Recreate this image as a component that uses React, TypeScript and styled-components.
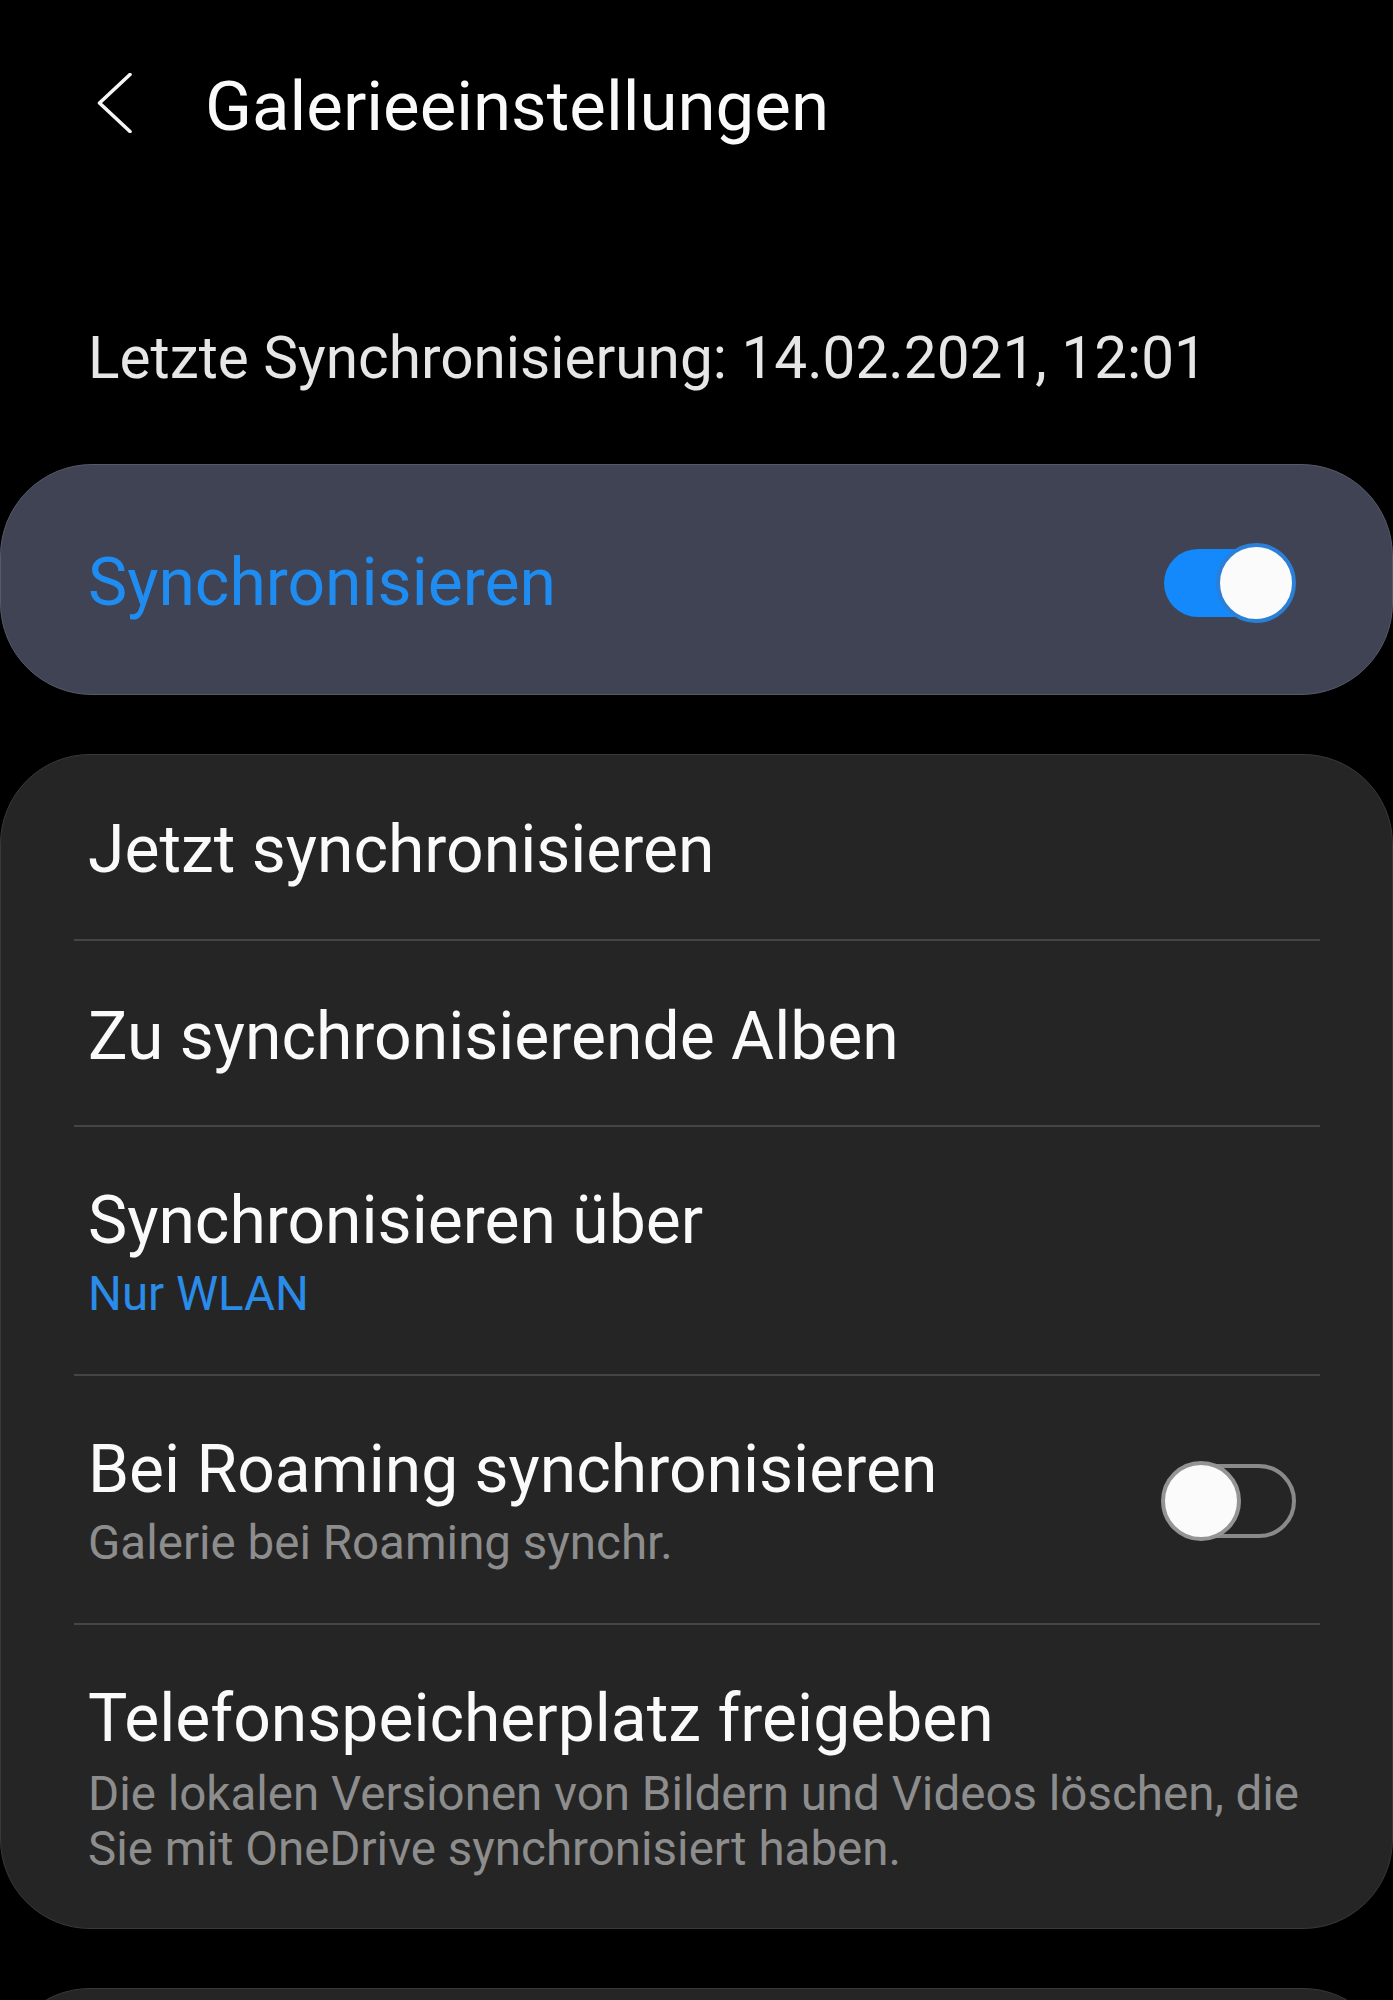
import React from "react";
import styled, { createGlobalStyle } from "styled-components";

const GlobalStyle = createGlobalStyle`
  html, body {
    margin: 0;
    padding: 0;
    background: #000000;
  }
  body {
    font-family: Roboto, "Noto Sans", "Liberation Sans", sans-serif;
    color: #fafafa;
    -webkit-font-smoothing: antialiased;
  }
  * { box-sizing: border-box; }
`;

const Screen = styled.div`
  width: 1393px;
  min-height: 2000px;
  background: #000000;
  overflow: hidden;
  display: flex;
  flex-direction: column;
`;

const Header = styled.header`
  display: flex;
  align-items: flex-start;
  padding: 65px 0 0 97px;
  height: 148px;
`;

const BackButton = styled.div`
  width: 36px;
  height: 60px;
  margin-top: 8px;
  display: flex;
  color: #f5f5f5;
`;

const Title = styled.h1`
  margin: 0 0 0 72px;
  font-size: 69px;
  line-height: 83px;
  font-weight: 400;
  color: #fafafa;
`;

const LastSync = styled.div`
  margin-top: 176px;
  padding-left: 88px;
  font-size: 58.5px;
  line-height: 68px;
  color: #e6e6e6;
`;

const MasterPill = styled.div`
  margin-top: 72px;
  height: 231px;
  background: #3f4354;
  border: 1px solid #555a6b;
  border-radius: 92px;
  display: flex;
  align-items: center;
  justify-content: space-between;
  padding: 6px 96px 0 87px;
`;

const MasterLabel = styled.span`
  font-size: 66px;
  line-height: 78px;
  color: #1e8cf0;
`;

const Card = styled.section<{ $minHeight?: number }>`
  margin-top: 59px;
  background: #252525;
  border: 1px solid #393939;
  border-radius: 90px;
  display: flex;
  flex-direction: column;
  min-height: ${(p) => (p.$minHeight ? `${p.$minHeight}px` : "auto")};
`;

const Row = styled.div<{ $top: number; $bottom: number }>`
  display: flex;
  align-items: center;
  justify-content: space-between;
  padding: ${(p) => p.$top}px 96px ${(p) => p.$bottom}px 87px;
`;

const RowText = styled.div`
  display: flex;
  flex-direction: column;
  min-width: 0;
`;

const RowTitle = styled.span`
  font-size: 66px;
  line-height: 78px;
  color: #fafafa;
  white-space: nowrap;
`;

const RowSub = styled.span<{ $accent?: boolean; $gap?: number }>`
  margin-top: ${(p) => p.$gap ?? 7}px;
  font-size: 47.5px;
  line-height: 55px;
  white-space: nowrap;
  color: ${(p) => (p.$accent ? "#2a8ce8" : "#8d8d8d")};
`;

const Divider = styled.div`
  height: 2px;
  margin: 0 72px 0 73px;
  background: #454545;
`;

const ToggleBox = styled.div<{ $on: boolean }>`
  position: relative;
  flex: 0 0 auto;
  width: ${(p) => (p.$on ? 132 : 135)}px;
  height: 82px;
`;

const Track = styled.div<{ $on: boolean }>`
  position: absolute;
  top: ${(p) => (p.$on ? 7 : 4)}px;
  bottom: ${(p) => (p.$on ? 7 : 4)}px;
  left: ${(p) => (p.$on ? 0 : 8)}px;
  right: ${(p) => (p.$on ? 6 : 0)}px;
  border-radius: 40px;
  background: ${(p) => (p.$on ? "#1389fb" : "transparent")};
  border: ${(p) => (p.$on ? "none" : "4px solid #8a8a8a")};
`;

const Knob = styled.div<{ $on: boolean }>`
  position: absolute;
  top: 1px;
  width: 80px;
  height: 80px;
  border-radius: 50%;
  background: #fbfbfb;
  ${(p) => (p.$on ? "right: 0;" : "left: 0;")}
  border: 4px solid ${(p) => (p.$on ? "#2a7fd8" : "#949494")};
`;

const Toggle = ({ on }: { on: boolean }) => (
  <ToggleBox $on={on}>
    <Track $on={on} />
    <Knob $on={on} />
  </ToggleBox>
);

export default function App() {
  return (
    <Screen>
      <GlobalStyle />
      <Header>
        <BackButton>
          <svg width="36" height="60" viewBox="0 0 36 60" fill="none">
            <polyline
              points="33,1.5 2.5,30 33,58.5"
              stroke="currentColor"
              strokeWidth="3.6"
              strokeLinecap="round"
              strokeLinejoin="round"
            />
          </svg>
        </BackButton>
        <Title>Galerieeinstellungen</Title>
      </Header>

      <LastSync>Letzte Synchronisierung: 14.02.2021, 12:01</LastSync>

      <MasterPill>
        <MasterLabel>Synchronisieren</MasterLabel>
        <Toggle on />
      </MasterPill>

      <Card>
        <Row $top={56} $bottom={50}>
          <RowTitle>Jetzt synchronisieren</RowTitle>
        </Row>
        <Divider />
        <Row $top={57} $bottom={49}>
          <RowTitle>Zu synchronisierende Alben</RowTitle>
        </Row>
        <Divider />
        <Row $top={55} $bottom={52}>
          <RowText>
            <RowTitle>Synchronisieren über</RowTitle>
            <RowSub $accent>Nur WLAN</RowSub>
          </RowText>
        </Row>
        <Divider />
        <Row $top={55} $bottom={52}>
          <RowText>
            <RowTitle>Bei Roaming synchronisieren</RowTitle>
            <RowSub>Galerie bei Roaming synchr.</RowSub>
          </RowText>
          <Toggle on={false} />
        </Row>
        <Divider />
        <Row $top={55} $bottom={51}>
          <RowText>
            <RowTitle>Telefonspeicherplatz freigeben</RowTitle>
            <RowSub $gap={9}>
              Die lokalen Versionen von Bildern und Videos löschen, die
              <br />
              Sie mit OneDrive synchronisiert haben.
            </RowSub>
          </RowText>
        </Row>
      </Card>

      <Card $minHeight={200} />
    </Screen>
  );
}
